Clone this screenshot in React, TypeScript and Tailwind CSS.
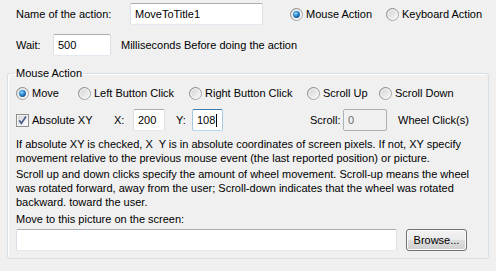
import type { ReactNode } from "react";

const FONT = "font-['Liberation_Sans',Arial,sans-serif]";

function Radio({ checked = false }: { checked?: boolean }) {
  return (
    <svg width="13" height="13" viewBox="0 0 13 13" className="shrink-0">
      <defs>
        <linearGradient id="rb-ring" x1="0" y1="0" x2="1" y2="1">
          <stop offset="0" stopColor="#7d7d7d" />
          <stop offset="1" stopColor="#b0b0b0" />
        </linearGradient>
        <linearGradient id="rb-fill" x1="0" y1="0" x2="1" y2="1">
          <stop offset="0" stopColor="#cfcfcf" />
          <stop offset="1" stopColor="#fbfbfb" />
        </linearGradient>
        <radialGradient id="rb-dot" cx="0.4" cy="0.35" r="0.75">
          <stop offset="0" stopColor="#9fdcff" />
          <stop offset="0.45" stopColor="#2b8ed6" />
          <stop offset="1" stopColor="#0c3f78" />
        </radialGradient>
      </defs>
      <circle cx="6.5" cy="6.5" r="6" fill="url(#rb-fill)" stroke="url(#rb-ring)" />
      <circle cx="6.5" cy="6.5" r="4.6" fill="none" stroke="#f7f7f7" strokeWidth="0.8" />
      {checked && <circle cx="6.5" cy="6.5" r="3.4" fill="url(#rb-dot)" />}
    </svg>
  );
}

function Check() {
  return (
    <svg width="13" height="13" viewBox="0 0 13 13" className="shrink-0">
      <defs>
        <linearGradient id="cb-fill" x1="0" y1="0" x2="1" y2="1">
          <stop offset="0" stopColor="#d6d6d6" />
          <stop offset="1" stopColor="#fcfcfc" />
        </linearGradient>
      </defs>
      <rect x="0.5" y="0.5" width="12" height="12" fill="#f4f4f4" stroke="#8f8f8f" />
      <rect x="2" y="2" width="9" height="9" fill="url(#cb-fill)" />
      <path d="M3.2 6.4 L5.4 9.2 L10 2.6" fill="none" stroke="#4a5f8f" strokeWidth="1.7" />
    </svg>
  );
}

function RadioOption({ label, checked, className = "" }: { label: string; checked?: boolean; className?: string }) {
  return (
    <div className={`flex items-center gap-[3px] ${className}`}>
      <Radio checked={checked} />
      <span>{label}</span>
    </div>
  );
}

function TextBox({
  children,
  className = "",
  focused = false,
  disabled = false,
}: {
  children?: ReactNode;
  className?: string;
  focused?: boolean;
  disabled?: boolean;
}) {
  const border = disabled
    ? "border-[#adb2b5] bg-[#f0f0f0] text-[#6d6d6d]"
    : focused
      ? "border-[#a4c9e3] border-t-[#3d7bad] border-b-[#b7d9ed] bg-white"
      : "border-[#dbdfe6] border-t-[#abadb3] border-b-[#e3e9ef] bg-white";
  return (
    <div className={`flex h-[22px] items-center rounded-[2px] border pl-[4px] ${border} ${className}`}>
      {children}
    </div>
  );
}

export default function App() {
  return (
    <div className={`h-[271px] w-[496px] overflow-hidden bg-[#f0f0f0] text-[11px] leading-[13px] text-black ${FONT}`}>
      <div className="flex h-[25px] items-center pl-[16px] pt-[3px]">
        <span className="w-[114px]">Name of the action:</span>
        <TextBox className="w-[133px]">MoveToTitle1</TextBox>
        <div className="ml-[27px] flex">
          <RadioOption checked label="Mouse Action" className="w-[96px]" />
          <RadioOption label="Keyboard Action" />
        </div>
      </div>

      <div className="mt-[9px] flex h-[22px] items-center pl-[16px]">
        <span className="w-[37px]">Wait:</span>
        <TextBox className="w-[58px]">500</TextBox>
        <span className="ml-[10px]">Milliseconds Before doing the action</span>
      </div>

      <fieldset className="ml-[7px] mt-[11px] w-[482px] rounded-[3px] border border-[#d5dfe5] pb-[7px] pl-[6px] shadow-[inset_1px_1px_0_#ffffff]">
        <legend className="px-[2px]">Mouse Action</legend>
        <div className="pl-[2px]">
          <div className="mt-[7px] flex h-[13px] items-center">
            <RadioOption checked label="Move" className="w-[62px]" />
            <RadioOption label="Left Button Click" className="w-[111px]" />
            <RadioOption label="Right Button Click" className="w-[118px]" />
            <RadioOption label="Scroll Up" className="w-[72px]" />
            <RadioOption label="Scroll Down" />
          </div>

          <div className="mt-[9px] flex h-[22px] items-center">
            <div className="flex w-[98px] items-center gap-[3px]">
              <Check />
              <span>Absolute XY</span>
            </div>
            <span className="w-[19px]">X:</span>
            <TextBox className="w-[32px]">200</TextBox>
            <span className="ml-[11px] w-[16px]">Y:</span>
            <TextBox focused className="w-[31px]">
              108<span className="ml-[1px] h-[13px] w-px bg-black" />
            </TextBox>
            <span className="ml-[87px] w-[33px]">Scroll:</span>
            <TextBox disabled className="w-[44px]">0</TextBox>
            <span className="ml-[11px]">Wheel Click(s)</span>
          </div>

          <p className="mt-[6px] leading-[14px]">
            If absolute XY is checked, X&nbsp; Y is in absolute coordinates of screen pixels. If not, XY specify
            <br />
            movement relative to the previous mouse event (the last reported position) or picture.
          </p>
          <p className="mt-[2px] leading-[14px]">
            Scroll up and down clicks specify the amount of wheel movement. Scroll-up means the wheel
            <br />
            was rotated forward, away from the user; Scroll-down indicates that the wheel was rotated
            <br />
            backward. toward the user.
          </p>

          <div className="mt-[4px]">Move to this picture on the screen:</div>

          <div className="mt-[3px] flex items-center">
            <TextBox className="w-[381px]" />
            <button className="ml-[9px] h-[22px] w-[61px] rounded-[3px] border border-[#707070] bg-[linear-gradient(#f2f2f2_0%,#ebebeb_50%,#dddddd_50%,#cfcfcf_100%)] shadow-[inset_0_0_0_1px_#fcfcfc] text-black">
              Browse...
            </button>
          </div>
        </div>
      </fieldset>
    </div>
  );
}
